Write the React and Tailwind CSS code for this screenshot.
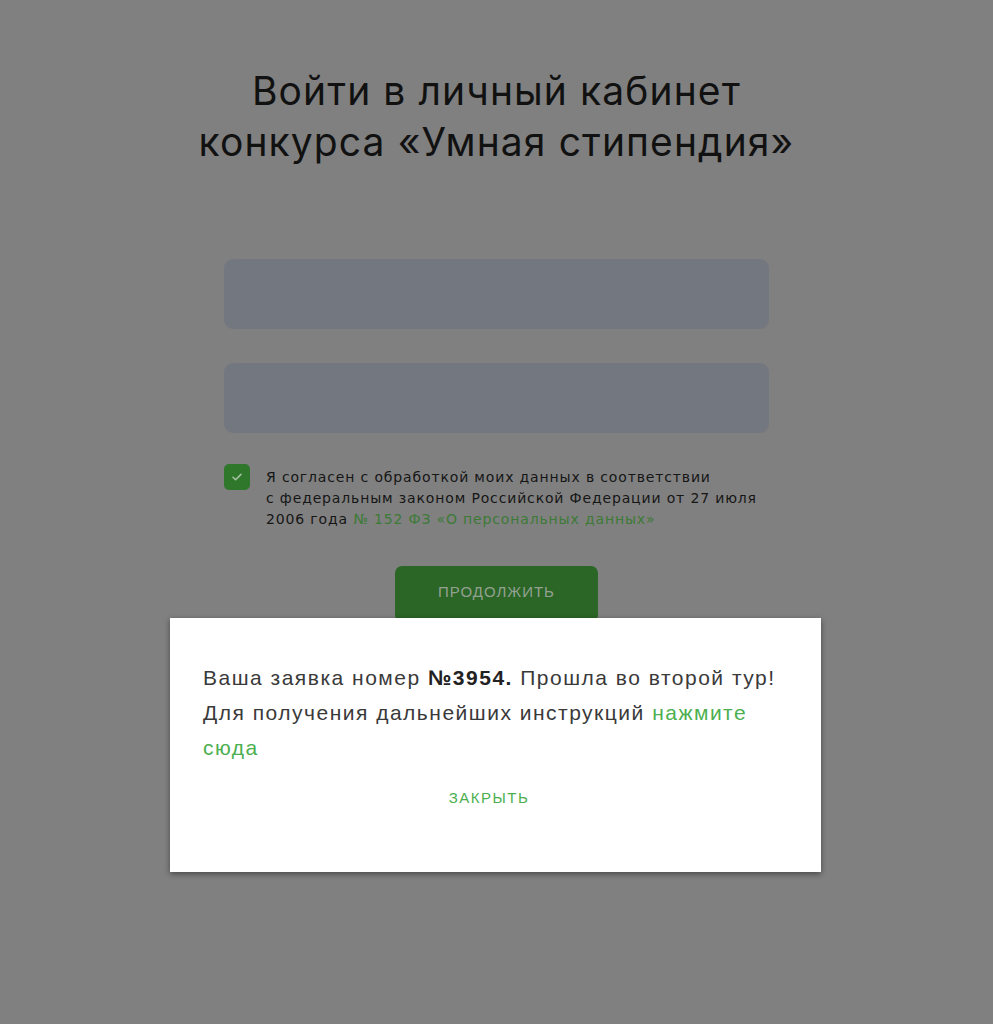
import React from "react";

export default function App() {
  return (
    <div className="relative min-h-[1024px] w-full bg-[#808080]" style={{ fontFamily: "'Liberation Sans', Arial, sans-serif" }}>
      <div className="flex flex-col items-center pt-[65px]">
        <h1 className="text-center text-[39px] leading-[51px] tracking-[1.1px] text-[#111] font-normal" style={{ fontFamily: "Inter, sans-serif" }}>
          Войти в личный кабинет
          <br />
          конкурса «Умная стипендия»
        </h1>
        <div className="mt-[92px] flex w-[545px] flex-col gap-[34px]">
          <div className="h-[70px] rounded-[9px] bg-[#73777f]" />
          <div className="h-[70px] rounded-[9px] bg-[#73777f]" />
        </div>
        <div className="mt-[31px] flex w-[545px] gap-[16px]">
          <div className="flex h-[26px] w-[26px] shrink-0 items-center justify-center rounded-[5px] bg-[#2f772b]">
            <svg width="14" height="14" viewBox="0 0 14 14" fill="none">
              <path d="M3 7.2l2.6 2.6L11 4.4" stroke="#a8c4a6" strokeWidth="1.5" strokeLinecap="round" strokeLinejoin="round" />
            </svg>
          </div>
          <p className="whitespace-nowrap pt-[3px] text-[14px] leading-[21px] tracking-[0.85px] text-[#161616]" style={{ fontFamily: "'DejaVu Sans', Verdana, sans-serif" }}>
            Я согласен с обработкой моих данных в соответствии
            <br />
            с федеральным законом Российской Федерации от 27 июля
            <br />
            2006 года <span className="text-[#3d7a36]">№ 152 ФЗ «О персональных данных»</span>
          </p>
        </div>
        <button className="mt-[36px] h-[56px] w-[203px] rounded-[7px] bg-[#2b6626] pb-[4px] text-[15px] tracking-[1px] text-[#93a192]" style={{ fontFamily: "'Liberation Sans', Arial, sans-serif" }}>
          ПРОДОЛЖИТЬ
        </button>
      </div>

      <div className="absolute left-[170px] top-[618px] h-[254px] w-[651px] bg-white px-[33px] pt-[42px] shadow-[0_2px_6px_rgba(0,0,0,0.45)]">
        <p className="text-[21px] leading-[35px] tracking-[1.5px] text-[#3a3a3a]">
          Ваша заявка номер <b className="font-bold text-[#222]">№3954.</b> Прошла во второй тур!
          <br />
          Для получения дальнейших инструкций <span className="text-[#4caf50]">нажмите</span>{" "}
          <span className="text-[#4caf50]">сюда</span>
        </p>
        <div className="mt-[22px] pr-[13px] text-center text-[15px] tracking-[1.5px] text-[#4caf50]">ЗАКРЫТЬ</div>
      </div>
    </div>
  );
}
